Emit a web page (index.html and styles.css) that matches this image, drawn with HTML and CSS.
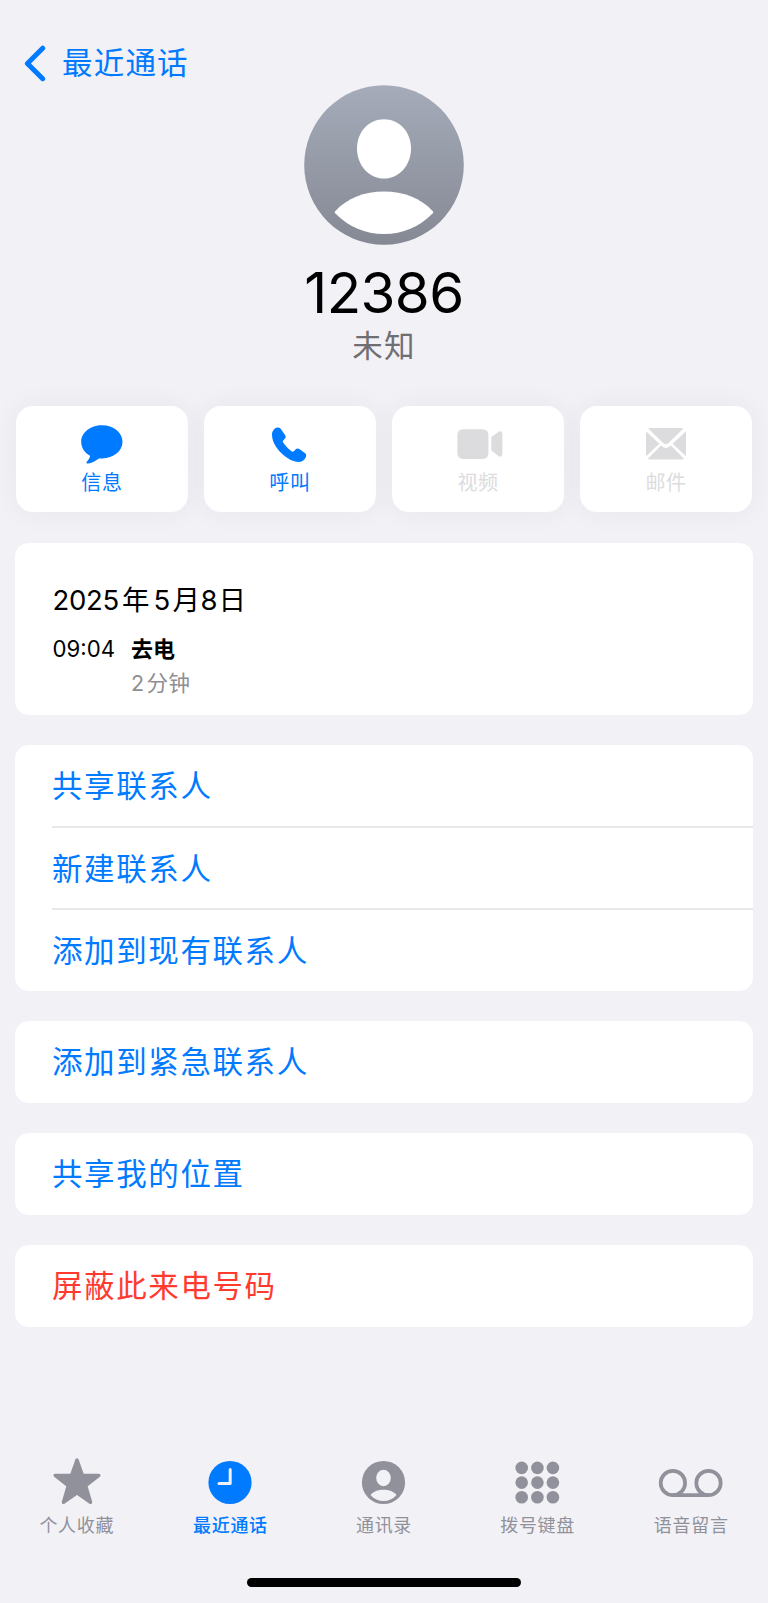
FILE: index.html
```html
<!DOCTYPE html>
<html lang="zh-CN">
<head>
<meta charset="utf-8">
<title>最近通话</title>
<link rel="stylesheet" href="styles.css">
</head>
<body>
<div class="screen">
  <header class="nav">
    <svg class="chevron" width="22" height="37" viewBox="0 0 22 37"><path d="M18.700 3.200 3.400 18.400 18.700 33.700"/></svg>
    <span class="back">最近通话</span>
  </header>

  <section class="profile">
    <svg class="avatar" width="160" height="160" viewBox="0 0 160 160">
      <defs><linearGradient id="shade" x1="0" y1="0" x2="0" y2="1"><stop offset="0" stop-color="#a5abb9"/><stop offset="1" stop-color="#858994"/></linearGradient></defs>
      <circle cx="80" cy="80" r="79.8" fill="url(#shade)"/>
      <path fill="#fff" d="M80 34.2C95.500 34.200 107 47 107 63.500C107 80.500 95 93.600 80 93.600C65 93.600 53 80.500 53 63.500C53 47 64.500 34.200 80 34.200Z"/>
      <path fill="#fff" d="M31.200 126.200Q30.300 127.400 31.400 128.500C45 142 61 149 80 149C99 149 115 142 128.600 128.500Q129.700 127.400 128.800 126.200C117 113.500 99.500 106.600 80 106.600C60.500 106.600 43 113.500 31.200 126.200Z"/>
    </svg>
    <h1 class="number">12386</h1>
    <p class="unknown">未知</p>
  </section>

  <section class="actions">
    <div class="action">
      <svg width="46" height="42" viewBox="0 0 46 42"><path d="M23 2.300C34.500 2.300 43.500 9.500 43.500 18.800C43.500 28.200 34.500 35.400 23 35.400Q21.500 35.400 20.400 35.200C17 37.600 12.500 40.200 9 40.500C7.500 40.600 7 39.500 8 38.400C9.800 36.400 10.800 34.800 11.100 32.800C5.500 29.800 2.200 24.800 2.200 18.800C2.200 9.500 11.500 2.300 23 2.300Z"/></svg>
      <span>信息</span>
    </div>
    <div class="action">
      <svg width="46" height="42" viewBox="0 0 46 42"><path d="M5 11.800C5 8 7.500 5.200 10.300 4.600C12 4.300 13.300 5 14.200 6.400L18.200 12.300C19 13.600 18.800 14.800 17.800 15.800L16.200 17.400C15.600 18 15.600 18.600 16 19.300C17 21 18.500 22.800 20.200 24.500C21.900 26.200 23.600 27.600 25 28.400C25.700 28.800 26.300 28.800 26.900 28.200L28.500 26.600C29.700 25.400 31 25.300 32.300 26.100L37.500 29.700C39 30.800 39.500 32 39 33.600C38.200 36.500 35.500 39 32 39C26 39 19.500 35.300 14 29.800C8.500 24.300 5 17.800 5 11.800Z"/></svg>
      <span>呼叫</span>
    </div>
    <div class="action disabled">
      <svg class="video" width="46" height="42" viewBox="0 0 46 42"><rect x=".4" y="6.200" width="31" height="29.700" rx="5.500"/><path d="M34.300 15.500Q34.300 14.300 35.400 13.300L41.700 8.800Q45.400 7.200 45.400 10.700V31.300Q45.400 34.700 41.700 33.200L35.400 28.300Q34.300 27.300 34.300 26.200Z"/></svg>
      <span>视频</span>
    </div>
    <div class="action disabled">
      <svg width="46" height="42" viewBox="0 0 46 42"><path d="M5.100 5.600Q6 4.900 7.500 4.900H37.500Q39.300 4.900 40.500 5.600L25.200 20.200Q22.800 22.300 20.400 20.200ZM3 8.200 16.300 20.800 3 33.300ZM43 8.200V33.300L29.600 20.800ZM18 22.600C21.200 25.800 24.500 25.800 27.900 22.600L41 35.700Q40 36.600 38.300 36.600H7.500Q5.900 36.600 4.800 35.700Z"/></svg>
      <span>邮件</span>
    </div>
  </section>

  <main class="groups">
    <section class="group history">
      <div class="date"><span class="year">2025</span><span class="han">年</span><span class="month">5</span><span class="han">月</span><span class="day">8</span><span class="han">日</span></div>
      <div class="call">
        <span class="time">09:04</span>
        <div class="detail"><div class="kind">去电</div><div class="duration"><span>2</span>分钟</div></div>
      </div>
    </section>
    <section class="group">
      <div class="row">共享联系人</div>
      <div class="row">新建联系人</div>
      <div class="row">添加到现有联系人</div>
    </section>
    <section class="group"><div class="row">添加到紧急联系人</div></section>
    <section class="group"><div class="row">共享我的位置</div></section>
    <section class="group"><div class="row danger">屏蔽此来电号码</div></section>
  </main>

  <nav class="tabs">
    <div class="tab">
      <svg width="66" height="50" viewBox="0 0 66 50"><path class="star" d="M33 3.100 38.300 18.200 54.800 18.400 41.700 28.700 46.500 45.200 33 35.900 19.500 45.200 24.300 28.700 11.200 18.400 27.700 18.200Z"/></svg>
      <span>个人收藏</span>
    </div>
    <div class="tab active">
      <svg width="66" height="50" viewBox="0 0 66 50"><circle cx="33" cy="25.500" r="21.600"/><path class="hands" d="M33.200 12.500V26.500H22"/></svg>
      <span>最近通话</span>
    </div>
    <div class="tab">
      <svg width="66" height="50" viewBox="0 0 66 50"><circle cx="32.500" cy="25.500" r="21.600"/><ellipse class="cut" cx="32.500" cy="21" rx="7.300" ry="8.200"/><path class="cut" d="M19.500 38C22 34.600 27 32.700 32.500 32.700C38 32.700 43 34.600 45.500 38C42 42 37.500 44 32.500 44C27.500 44 23 42 19.500 38Z"/></svg>
      <span>通讯录</span>
    </div>
    <div class="tab">
      <svg width="66" height="50" viewBox="0 0 66 50"><circle cx="16.700" cy="10.900" r="6.300"/><circle cx="32.400" cy="10.900" r="6.300"/><circle cx="47.900" cy="10.900" r="6.300"/><circle cx="16.700" cy="25.600" r="6.300"/><circle cx="32.400" cy="25.600" r="6.300"/><circle cx="47.900" cy="25.600" r="6.300"/><circle cx="16.700" cy="40.200" r="6.300"/><circle cx="32.400" cy="40.200" r="6.300"/><circle cx="47.900" cy="40.200" r="6.300"/></svg>
      <span>拨号键盘</span>
    </div>
    <div class="tab">
      <svg width="66" height="50" viewBox="0 0 66 50"><g class="tape"><circle cx="14.900" cy="26" r="12.200"/><circle cx="50.500" cy="26" r="12.200"/><path d="M14.900 38.200H50.500"/></g></svg>
      <span>语音留言</span>
    </div>
  </nav>
  <div class="home"></div>
</div>
</body>
</html>
```

FILE: styles.css
```css
* { box-sizing: border-box; }
body {
  margin: 0;
  background: #f2f1f6;
  color: #000;
  font-family: Inter, "Noto Sans CJK SC", sans-serif;
}
svg { display: block; }
.screen {
  display: flex;
  flex-direction: column;
  width: 768px;
  height: 1603px;
}
.nav {
  display: flex;
  align-items: center;
  gap: 16px;
  height: 84px;
  padding: 42px 0 0 24px;
}
.chevron { fill: none; stroke: #007aff; stroke-width: 5; stroke-linecap: round; stroke-linejoin: round; }
.back {
  color: #007aff;
  font-size: 30.500px;
  line-height: 40px;
  letter-spacing: 1.200px;
}
.profile {
  display: flex;
  flex-direction: column;
  align-items: center;
  height: 321.500px;
}
.avatar { margin-top: .5px; }
.number {
  margin: 18.500px 0 0;
  font-size: 56.500px;
  font-weight: 400;
  line-height: 60px;
  letter-spacing: -.6px;
}
.unknown {
  margin: 2.500px 0 0;
  color: #6f6f73;
  font-size: 30.500px;
  line-height: 40px;
  letter-spacing: 1.200px;
}
.actions {
  display: grid;
  grid-template-columns: repeat(4, 1fr);
  gap: 16.300px;
  padding: 0 16px;
  height: 106.200px;
}
.action {
  display: flex;
  flex-direction: column;
  align-items: center;
  padding-top: 17.500px;
  border-radius: 17px;
  background: #fff;
  box-shadow: 0 0 28px rgba(50, 50, 80, .055);
  color: #007aff;
  fill: #007aff;
  font-size: 20px;
  line-height: 30px;
  letter-spacing: .6px;
}
.action span { margin-top: 3px; }
.disabled { color: #dcdcde; fill: #dcdcde; }
.video { margin-left: 4px; }
.groups {
  display: flex;
  flex-direction: column;
  gap: 30px;
  padding: 31px 15.300px 0;
  height: 740px;
}
.group {
  flex: none;
  border-radius: 14px;
  background: #fff;
}
.history { height: 172.300px; padding: 37px 0 0 37.200px; }
.date {
  display: flex;
  height: 40px;
  font-size: 27.500px;
  line-height: 40px;
}
.date .han { width: 27.500px; font-size: 27.500px; }
.year { width: 69.500px; letter-spacing: -.3px; }
.month { width: 19px; margin-left: 4px; }
.day { width: 18px; margin-left: .5px; }
.call { display: flex; margin-top: 12px; font-size: 22px; line-height: 34px; }
.time { width: 78.500px; font-size: 22.200px; }
.kind { font-weight: 700; font-size: 22px; }
.duration { color: #8e8e93; font-size: 21.500px; letter-spacing: .5px; }
.duration span { margin-right: 2px; }
.row {
  height: 82px;
  margin-left: 36.700px;
  padding-top: .5px;
  font-size: 30.500px;
  line-height: 82px;
  letter-spacing: 1.600px;
  color: #007aff;
}
.row + .row {
  height: 83px;
  margin-top: -1px;
  border-top: 2px solid #e8e8eb;
}
.danger { color: #ff3b30; }
.tabs {
  display: grid;
  grid-template-columns: repeat(5, 1fr);
  margin-top: 205px;
}
.tab {
  display: flex;
  flex-direction: column;
  align-items: center;
  color: #91919b;
  fill: #91919b;
  font-size: 18px;
  font-weight: 400;
  line-height: 30px;
  letter-spacing: .7px;
}
.tab span { margin-top: 4px; }
.active { color: #007aff; fill: #007aff; font-weight: 500; }
.star { stroke: #91919b; stroke-width: 3.500; stroke-linejoin: round; }
.hands { fill: none; stroke: #f2f1f6; stroke-width: 3; stroke-linecap: round; stroke-linejoin: round; }
.cut { fill: #f2f1f6; }
.tape { fill: none; stroke: #91919b; stroke-width: 3.700; }
.home {
  width: 274px;
  height: 9.500px;
  margin: auto auto 16px;
  border-radius: 5px;
  background: #000;
}
```
